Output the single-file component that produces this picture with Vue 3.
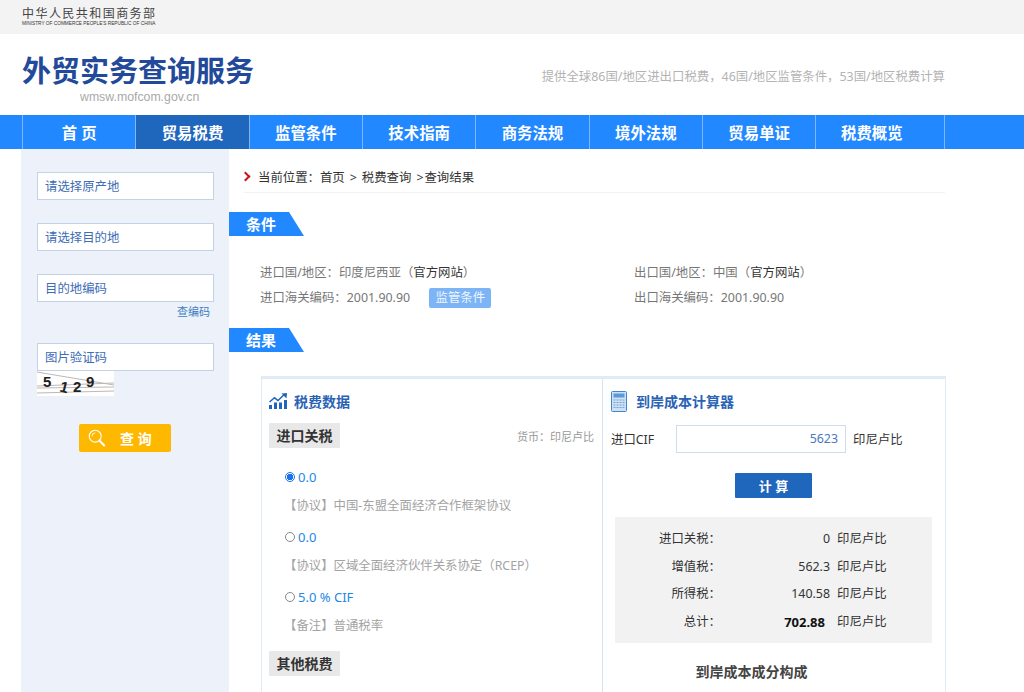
<template>
  <div class="page">
    <div class="topbar">
      <div class="ministry">
        <div class="ministry-cn">中华人民共和国商务部</div>
        <div class="ministry-en">MINISTRY OF COMMERCE PEOPLE'S REPUBLIC OF CHINA</div>
      </div>
    </div>

    <div class="header">
      <div class="logo">
        <div class="logo-title">外贸实务查询服务</div>
        <div class="logo-url">wmsw.mofcom.gov.cn</div>
      </div>
      <div class="slogan">提供全球86国/地区进出口税费，46国/地区监管条件，53国/地区税费计算</div>
    </div>

    <div class="nav">
      <a
        v-for="item in navItems"
        :key="item"
        class="nav-item"
        :class="{ active: item === '贸易税费' }"
      >{{ item }}</a>
    </div>

    <div class="body">
      <aside class="sidebar">
        <div class="field">请选择原产地</div>
        <div class="field">请选择目的地</div>
        <div class="field field-code">目的地编码</div>
        <div class="code-link">查编码</div>
        <div class="field field-captcha">图片验证码</div>
        <svg class="captcha" viewBox="0 0 77 25">
          <rect width="77" height="25" fill="#fff"/>
          <path d="M0 1 L77 14 M0 15 L77 12 M0 22 L77 20 M0 17 L77 16" stroke="#bdb8b4" stroke-width="1" fill="none"/>
          <text x="6" y="16" class="captcha-num">5</text>
          <text x="23" y="21" class="captcha-num" transform="rotate(14 26 16)">1</text>
          <text x="36" y="21" class="captcha-num">2</text>
          <text x="49" y="16" class="captcha-num">9</text>
        </svg>
        <button class="btn-query">
          <svg viewBox="0 0 20 20" fill="none" stroke="#fff" stroke-width="1.2">
            <circle cx="8" cy="8" r="6.6"/>
            <path d="M12.6 12.8 L18 18.4" stroke-width="2.2" stroke-linecap="round"/>
            <path d="M4.4 8 A3.6 3.6 0 0 1 8 4.4" stroke-width="1"/>
          </svg>
          <span>查 询</span>
        </button>
      </aside>

      <main class="main">
        <div class="crumbs">
          <span class="crumb-arrow"></span>
          <span>当前位置：首页<span class="sep">&gt;</span>税费查询<span class="sep sep-last">&gt;</span>查询结果</span>
        </div>

        <div class="tag">条件</div>
        <div class="cond">
          <div class="cond-col">
            <div class="cond-line">进口国/地区：印度尼西亚（<b>官方网站</b>）</div>
            <div class="cond-line">进口海关编码：2001.90.90 <span class="btn-cond">监管条件</span></div>
          </div>
          <div class="cond-col">
            <div class="cond-line">出口国/地区：中国（<b>官方网站</b>）</div>
            <div class="cond-line">出口海关编码：2001.90.90</div>
          </div>
        </div>

        <div class="tag">结果</div>
        <div class="result">
          <div class="pane-left">
            <div class="pane-title">
              <svg class="icon-chart" viewBox="0 0 18 16">
                <rect x="0" y="12" width="3" height="4"/>
                <rect x="5" y="9.5" width="3" height="6.5"/>
                <rect x="10" y="9.5" width="3" height="6.5"/>
                <rect x="15" y="7" width="3" height="9"/>
                <path d="M0.5 9 L5.5 4.8 L9 7.5 L15 1.8" fill="none" stroke="#1f66bd" stroke-width="1.5"/>
                <path d="M12.5 0.5 L18 0 L17.5 5.5 Z"/>
              </svg>
              税费数据
            </div>
            <div class="rate-head">
              <span class="chip">进口关税</span>
              <span class="currency">货币：印尼卢比</span>
            </div>
            <div class="rates">
              <div v-for="rate in rates" :key="rate.note" class="rate">
                <div class="rate-value">
                  <span class="radio" :class="{ checked: rate.checked }"></span>
                  {{ rate.value }}
                </div>
                <div class="rate-note">{{ rate.note }}</div>
              </div>
            </div>
            <span class="chip">其他税费</span>
          </div>

          <div class="pane-right">
            <div class="pane-title">
              <svg class="icon-calc" viewBox="0 0 16 21">
                <rect x="0.5" y="0.5" width="15" height="20" rx="1" fill="#cfe0f2" stroke="#3f86d2"/>
                <rect x="2.5" y="2.5" width="11" height="4" fill="#5b9ad8"/>
                <path d="M2.5 9 H13.5 M2.5 11.5 H13.5 M2.5 14 H13.5 M2.5 16.5 H13.5" stroke="#6ea6dc" stroke-width="1.2" stroke-dasharray="2 1"/>
              </svg>
              到岸成本计算器
            </div>
            <div class="cif-row">
              <span class="cif-label">进口CIF</span>
              <div class="cif-input">5623</div>
              <span>印尼卢比</span>
            </div>
            <button class="btn-calc">计 算</button>
            <div class="sum">
              <div v-for="row in sumRows" :key="row.label" class="sum-row">
                <span class="sum-label">{{ row.label }}：</span>
                <span class="sum-value" :class="{ total: row.total }">{{ row.value }}</span>
                <span class="sum-unit">印尼卢比</span>
              </div>
            </div>
            <div class="chart-title">到岸成本成分构成</div>
          </div>
        </div>
      </main>
    </div>
  </div>
</template>

<script setup>
const navItems = ["首 页", "贸易税费", "监管条件", "技术指南", "商务法规", "境外法规", "贸易单证", "税费概览"];

const rates = [
  { value: "0.0", note: "【协议】中国-东盟全面经济合作框架协议", checked: true },
  { value: "0.0", note: "【协议】区域全面经济伙伴关系协定（RCEP）", checked: false },
  { value: "5.0 % CIF", note: "【备注】普通税率", checked: false },
];

const sumRows = [
  { label: "进口关税", value: "0" },
  { label: "增值税", value: "562.3" },
  { label: "所得税", value: "140.58" },
  { label: "总计", value: "702.88", total: true },
];
</script>

<style>
html, body {
  margin: 0;
  overflow: hidden;
  background: #fff;
}
</style>

<style scoped>
.page {
  height: 692px;
  overflow: hidden;
  font-family: "Noto Sans", "Noto Sans CJK SC", sans-serif;
  font-size: 12.4px;
  color: #333;
}

.topbar {
  height: 34px;
  background: #f3f3f3;
  padding-left: 22px;
}

.ministry-cn {
  padding-top: 6px;
  font-size: 12px;
  line-height: 15px;
  letter-spacing: 1.45px;
  color: #444;
  white-space: nowrap;
}

.ministry-en {
  font-family: "Liberation Sans", sans-serif;
  font-size: 4.75px;
  line-height: 6px;
  color: #333;
  white-space: nowrap;
}

.header {
  height: 81px;
  display: flex;
  justify-content: space-between;
  padding: 0 79px 0 22px;
}

.logo-title {
  margin-top: 16px;
  font-size: 29px;
  line-height: 42px;
  font-weight: 700;
  color: #234a9a;
  white-space: nowrap;
}

.logo-url {
  margin: -3px 0 0 58px;
  font-family: "Liberation Sans", sans-serif;
  font-size: 12.3px;
  line-height: 16px;
  color: #a9a9a9;
}

.slogan {
  margin-top: 33px;
  font-size: 12.4px;
  line-height: 20px;
  color: #b3b3b3;
}

.nav {
  height: 34px;
  background: #2288ff;
  display: flex;
  padding-left: 22px;
}

.nav-item {
  width: 113.33px;
  box-sizing: border-box;
  border-left: 1px solid #7fb8fa;
  text-align: center;
  font-size: 15.4px;
  font-weight: 700;
  line-height: 37px;
  color: #fff;
}

.nav-item:last-child {
  width: 130px;
  padding-right: 17px;
  border-right: 1px solid #7fb8fa;
}

.nav-item.active {
  background: #1f66bd;
}

.body {
  display: flex;
}

.sidebar {
  width: 208px;
  height: 543px;
  margin-left: 21px;
  flex-shrink: 0;
  box-sizing: border-box;
  padding: 23px 15px 0 16px;
  background: #edf2fa;
}

.field {
  height: 28px;
  box-sizing: border-box;
  margin-bottom: 23px;
  padding-left: 7px;
  border: 1px solid #c3d2e6;
  background: #fff;
  line-height: 27px;
  color: #3d6db5;
}

.field-code {
  margin-bottom: 0;
}

.code-link {
  height: 41px;
  padding-right: 4px;
  text-align: right;
  font-size: 11px;
  line-height: 20px;
  color: #3d7fc4;
}

.field-captcha {
  margin-bottom: 0;
}

.captcha {
  display: block;
  width: 77px;
  height: 25px;
}

.captcha-num {
  font-family: "Liberation Sans", sans-serif;
  font-size: 15px;
  font-weight: 700;
  fill: #222;
}

.btn-query {
  display: flex;
  align-items: center;
  width: 92px;
  height: 28px;
  margin: 28px 0 0 42px;
  padding: 0 0 0 9px;
  border: none;
  border-radius: 2px;
  background: #ffb800;
  font-family: inherit;
  font-size: 14px;
  font-weight: 700;
  color: #fff;
}

.btn-query svg {
  width: 18px;
  height: 18px;
  margin-right: 14px;
}

.main {
  flex: 1;
  min-width: 0;
}

.crumbs {
  display: flex;
  align-items: center;
  height: 44px;
  box-sizing: border-box;
  padding-top: 12px;
  margin: 0 79px 19px 15px;
  border-bottom: 1px solid #f2f2f2;
  color: #333;
}

.sep {
  margin: 0 5px 0 5px;
}

.sep-last {
  margin: 0 1px 0 5px;
}

.crumb-arrow {
  width: 5px;
  height: 5px;
  margin: 0 9px 0 -2px;
  border-top: 2.5px solid #c8161d;
  border-right: 2.5px solid #c8161d;
  transform: rotate(45deg);
}

.tag {
  width: 75px;
  height: 24px;
  box-sizing: border-box;
  padding-left: 17px;
  background: #2288ff;
  clip-path: polygon(0 0, 60px 0, 75px 100%, 0 100%);
  font-size: 15px;
  font-weight: 700;
  line-height: 25px;
  color: #fff;
}

.cond {
  display: flex;
  padding: 24px 0 0 31px;
  height: 68px;
  color: #777;
}

.cond-col {
  width: 374px;
}

.cond-line {
  height: 25px;
  line-height: 25px;
  white-space: nowrap;
}

.cond-line b {
  font-weight: 400;
  color: #333;
}

.btn-cond {
  display: inline-block;
  width: 62px;
  height: 20px;
  margin-left: 16px;
  border-radius: 2px;
  background: #7db4f5;
  text-align: center;
  line-height: 20px;
  color: #eef6ff;
}

.result {
  display: flex;
  width: 685px;
  height: 360px;
  margin: 24px 0 0 32px;
  box-sizing: border-box;
  border: 1px solid #e1ebf5;
  border-top-width: 3px;
}

.pane-left {
  width: 341px;
  box-sizing: border-box;
  padding: 0 8px 0 7px;
  border-right: 1px solid #d5e2ef;
}

.pane-right {
  flex: 1;
  min-width: 0;
  padding: 0 12px 0 8px;
}

.pane-title {
  display: flex;
  align-items: center;
  height: 44px;
  font-size: 14px;
  font-weight: 700;
  color: #2a63b5;
}

.icon-chart {
  width: 18px;
  height: 16px;
  margin-right: 7px;
  fill: #1f66bd;
}

.icon-calc {
  width: 16px;
  height: 21px;
  margin-right: 9px;
}

.rate-head {
  display: flex;
  justify-content: space-between;
  align-items: center;
}

.chip {
  display: inline-block;
  width: 71px;
  height: 25px;
  border-radius: 1px;
  background: #e8e8e8;
  text-align: center;
  font-size: 14px;
  font-weight: 700;
  line-height: 25px;
  color: #333;
}

.currency {
  font-size: 11px;
  color: #999;
}

.rates {
  padding: 14px 0 9px;
}

.rate {
  padding-left: 16px;
}

.rate-value {
  display: flex;
  align-items: center;
  height: 30px;
  font-size: 13px;
  color: #2288e8;
}

.radio {
  width: 10px;
  height: 10px;
  box-sizing: border-box;
  margin-right: 3px;
  border: 1px solid #888;
  border-radius: 50%;
  background: #fff;
}

.radio.checked {
  border-color: #1a73e8;
  background: radial-gradient(circle, #1a73e8 0 3px, #fff 3.4px);
}

.rate-note {
  height: 30px;
  line-height: 28px;
  margin-left: -1px;
  color: #a3a3a3;
  white-space: nowrap;
}

.cif-row {
  display: flex;
  align-items: center;
  height: 28px;
  margin-top: 2px;
  color: #333;
}

.cif-label {
  width: 65px;
}

.cif-input {
  width: 170px;
  height: 28px;
  box-sizing: border-box;
  margin-right: 7px;
  padding-right: 7px;
  border: 1px solid #cfdcec;
  text-align: right;
  line-height: 26px;
  color: #4a78c0;
}

.btn-calc {
  display: block;
  width: 77px;
  height: 25px;
  margin: 20px 0 0 124px;
  border: none;
  border-radius: 1px;
  background: #1f66bd;
  font-family: inherit;
  font-size: 13px;
  font-weight: 700;
  color: #fff;
}

.sum {
  margin: 19px 0 0 4px;
  padding: 8px 0 7px;
  width: 317px;
  background: #f2f2f2;
}

.sum-row {
  display: flex;
  height: 27.7px;
  line-height: 28px;
}

.sum-label {
  width: 106px;
  text-align: right;
}

.sum-value {
  width: 109px;
  text-align: right;
}

.sum-value.total {
  width: 104px;
  padding-right: 5px;
  font-size: 13px;
  font-weight: 700;
  color: #111;
}

.sum-unit {
  margin-left: 7px;
}

.chart-title {
  width: 291px;
  margin: 18px 0 0 -5px;
  text-align: center;
  font-size: 14px;
  font-weight: 700;
  line-height: 22px;
  color: #444;
}
</style>
